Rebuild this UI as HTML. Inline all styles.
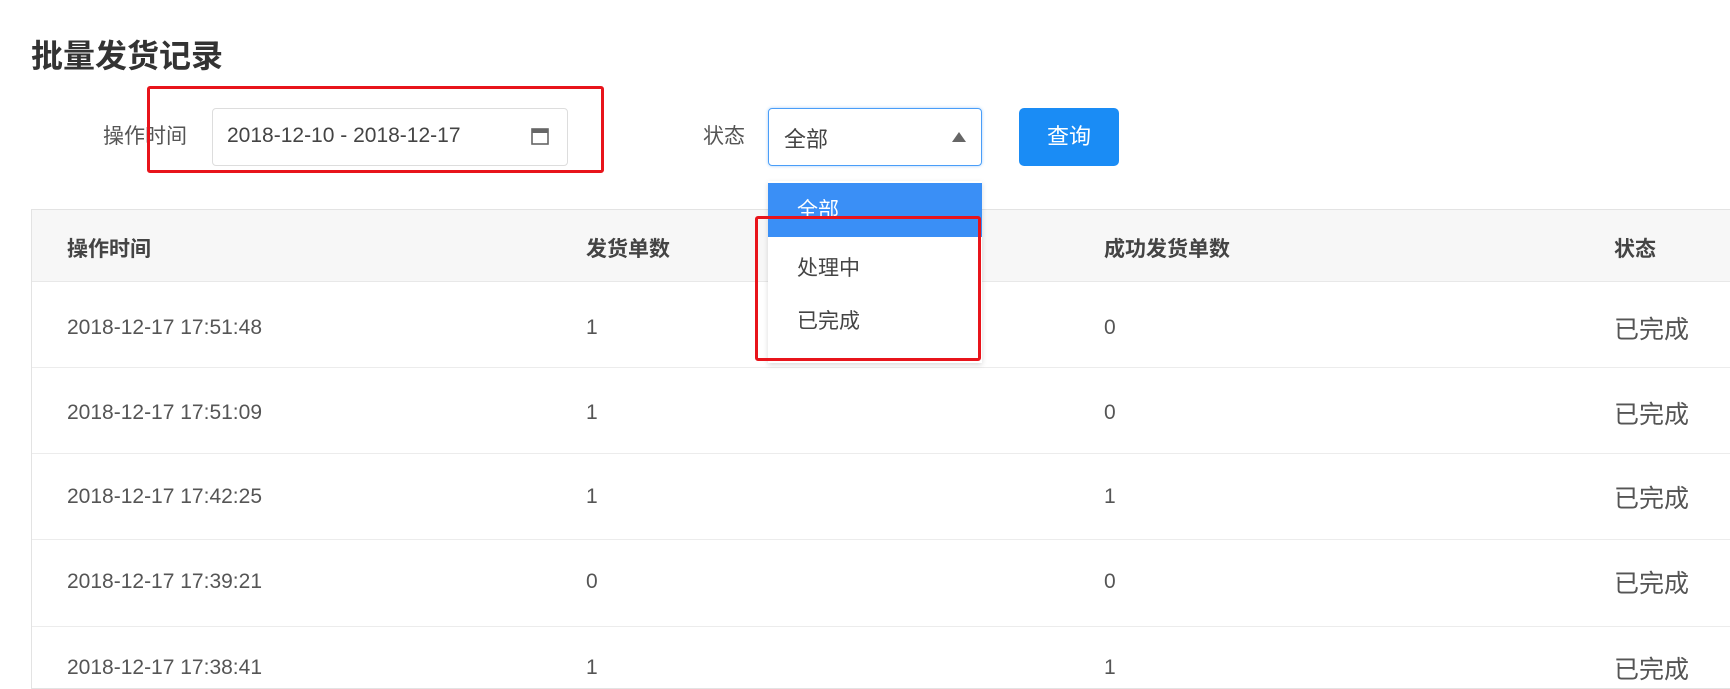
<!DOCTYPE html>
<html><head><meta charset="utf-8"><style>
*{margin:0;padding:0;box-sizing:border-box}
body{width:1730px;height:677px;overflow:hidden;background:#fff;font-family:"Liberation Sans","Noto Sans CJK SC",sans-serif;color:#555;position:relative}
.a{position:absolute}
.title{left:31px;top:31px;font-size:32px;font-weight:bold;color:#333}
.lbl{font-size:21px;color:#555}
.inp{border:1px solid #ddd;border-radius:4px;background:#fff}
.table{left:31px;top:209px;width:1720px;height:480px;border:1px solid #e3e3e3;border-right:none}
.hdr{position:absolute;left:0;top:0;right:0;height:72px;background:#f7f7f7;border-bottom:1px solid #e8e8e8}
.row{position:absolute;left:0;right:0;height:86px;border-bottom:1px solid #ececec}
.c{position:absolute;font-size:21px;color:#555;transform:translateY(-50%)}
.h{font-weight:bold;color:#444;font-size:21px}
.s{font-size:25px}
</style></head><body>
<div class="a title">批量发货记录</div>

<div class="a lbl" style="left:103px;top:120px">操作时间</div>
<div class="a inp" style="left:212px;top:108px;width:356px;height:58px"></div>
<div class="a" style="left:227px;top:124px;font-size:21px;color:#444">2018-12-10 - 2018-12-17</div>
<svg class="a" style="left:530px;top:126px" width="20" height="20" viewBox="0 0 20 20"><rect x="2" y="3" width="16" height="15" fill="none" stroke="#666" stroke-width="1.6"/><rect x="2" y="3" width="16" height="4" fill="#666"/></svg>
<div class="a" style="left:147px;top:86px;width:457px;height:87px;border:3px solid #e8141b;border-radius:3px"></div>

<div class="a lbl" style="left:703px;top:120px">状态</div>
<div class="a" style="left:768px;top:108px;width:214px;height:58px;border:1px solid #4a9ef8;border-radius:4px;box-shadow:0 0 3px #a8cff8"></div>
<div class="a" style="left:784px;top:122px;font-size:22px;color:#444">全部</div>
<svg class="a" style="left:951px;top:131px" width="16" height="12"><polygon points="8,1 15,11 1,11" fill="#666"/></svg>
<div class="a" style="left:1019px;top:108px;width:100px;height:58px;background:#1a8cf5;border-radius:5px;color:#fff;font-size:22px;text-align:center;line-height:58px">查询</div>

<div class="a table">
 <div class="hdr"></div>
 <div class="c h" style="left:35px;top:38px">操作时间</div>
 <div class="c h" style="left:554px;top:38px">发货单数</div>
 <div class="c h" style="left:1072px;top:38px">成功发货单数</div>
 <div class="c h" style="left:1582px;top:38px">状态</div>
 <div class="row" style="top:72px"></div>
 <div class="row" style="top:158px"></div>
 <div class="row" style="top:244px"></div>
 <div class="row" style="top:331px"></div>
 <div class="c" style="left:35px;top:118px">2018-12-17 17:51:48</div><div class="c" style="left:554px;top:118px">1</div><div class="c" style="left:1072px;top:118px">0</div><div class="c s" style="left:1582px;top:118px">已完成</div>
 <div class="c" style="left:35px;top:203px">2018-12-17 17:51:09</div><div class="c" style="left:554px;top:203px">1</div><div class="c" style="left:1072px;top:203px">0</div><div class="c s" style="left:1582px;top:203px">已完成</div>
 <div class="c" style="left:35px;top:287px">2018-12-17 17:42:25</div><div class="c" style="left:554px;top:287px">1</div><div class="c" style="left:1072px;top:287px">1</div><div class="c s" style="left:1582px;top:287px">已完成</div>
 <div class="c" style="left:35px;top:372px">2018-12-17 17:39:21</div><div class="c" style="left:554px;top:372px">0</div><div class="c" style="left:1072px;top:372px">0</div><div class="c s" style="left:1582px;top:372px">已完成</div>
 <div class="c" style="left:35px;top:458px">2018-12-17 17:38:41</div><div class="c" style="left:554px;top:458px">1</div><div class="c" style="left:1072px;top:458px">1</div><div class="c s" style="left:1582px;top:458px">已完成</div>
</div>

<div class="a" style="left:768px;top:181px;width:214px;height:182px;background:#fff;box-shadow:0 2px 5px rgba(0,0,0,.15);overflow:hidden">
 <div style="position:absolute;left:0;top:2px;width:214px;height:54px;background:#3a8ff6"></div>
 <div style="position:absolute;left:29px;top:13px;font-size:21px;color:#fff">全部</div>
 <div style="position:absolute;left:29px;top:71px;font-size:21px;color:#444">处理中</div>
 <div style="position:absolute;left:29px;top:124px;font-size:21px;color:#444">已完成</div>
</div>
<div class="a" style="left:755px;top:216px;width:226px;height:145px;border:3px solid #e8141b;border-radius:3px"></div>
</body></html>
